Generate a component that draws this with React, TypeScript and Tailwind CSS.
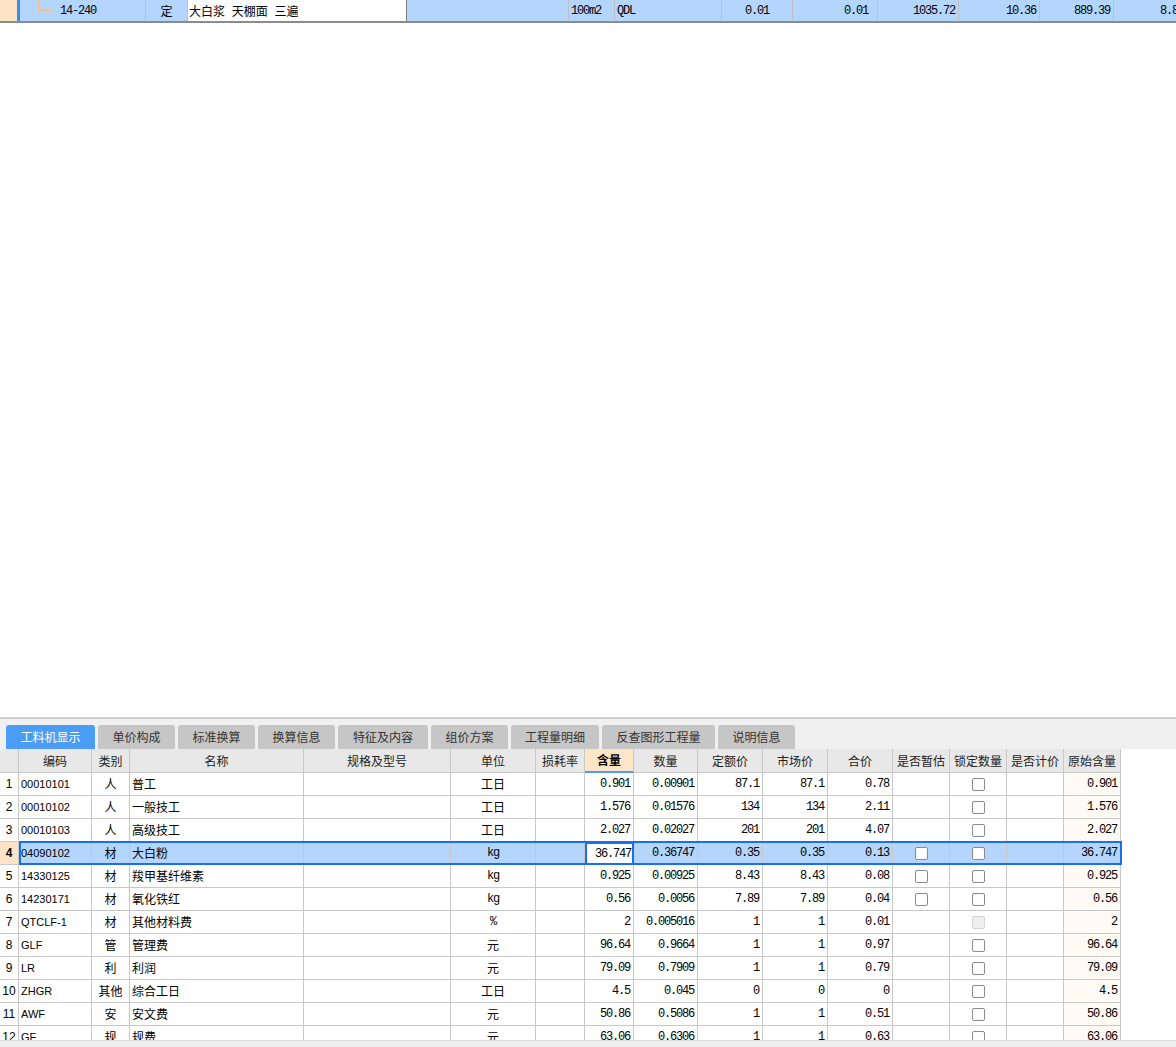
import React from "react";

const cjk = "font-['Noto_Sans_CJK_SC','Noto_Sans',sans-serif]";
const mono = "font-['Liberation_Mono','Noto_Sans_CJK_SC',monospace] tracking-[-1.2px]";
const sans = "font-['Liberation_Sans','Noto_Sans_CJK_SC',sans-serif]";

type Row = {
    code: string;
    kind: string;
    name: string;
    unit: string;
    qty: string;
    amount: string;
    quota: string;
    market: string;
    total: string;
    est?: boolean;
    lockDisabled?: boolean;
    orig: string;
};

const rows: Row[] = [
    { code: "00010101", kind: "人", name: "普工", unit: "工日", qty: "0.901", amount: "0.00901", quota: "87.1", market: "87.1", total: "0.78", orig: "0.901" },
    { code: "00010102", kind: "人", name: "一般技工", unit: "工日", qty: "1.576", amount: "0.01576", quota: "134", market: "134", total: "2.11", orig: "1.576" },
    { code: "00010103", kind: "人", name: "高级技工", unit: "工日", qty: "2.027", amount: "0.02027", quota: "201", market: "201", total: "4.07", orig: "2.027" },
    { code: "04090102", kind: "材", name: "大白粉", unit: "kg", qty: "36.747", amount: "0.36747", quota: "0.35", market: "0.35", total: "0.13", est: true, orig: "36.747" },
    { code: "14330125", kind: "材", name: "羧甲基纤维素", unit: "kg", qty: "0.925", amount: "0.00925", quota: "8.43", market: "8.43", total: "0.08", est: true, orig: "0.925" },
    { code: "14230171", kind: "材", name: "氧化铁红", unit: "kg", qty: "0.56", amount: "0.0056", quota: "7.89", market: "7.89", total: "0.04", est: true, orig: "0.56" },
    { code: "QTCLF-1", kind: "材", name: "其他材料费", unit: "%", qty: "2", amount: "0.005016", quota: "1", market: "1", total: "0.01", lockDisabled: true, orig: "2" },
    { code: "GLF", kind: "管", name: "管理费", unit: "元", qty: "96.64", amount: "0.9664", quota: "1", market: "1", total: "0.97", orig: "96.64" },
    { code: "LR", kind: "利", name: "利润", unit: "元", qty: "79.09", amount: "0.7909", quota: "1", market: "1", total: "0.79", orig: "79.09" },
    { code: "ZHGR", kind: "其他", name: "综合工日", unit: "工日", qty: "4.5", amount: "0.045", quota: "0", market: "0", total: "0", orig: "4.5" },
    { code: "AWF", kind: "安", name: "安文费", unit: "元", qty: "50.86", amount: "0.5086", quota: "1", market: "1", total: "0.51", orig: "50.86" },
    { code: "GF", kind: "规", name: "规费", unit: "元", qty: "63.06", amount: "0.6306", quota: "1", market: "1", total: "0.63", orig: "63.06" },
];

const tabs = ["工料机显示", "单价构成", "标准换算", "换算信息", "特征及内容", "组价方案", "工程量明细", "反查图形工程量", "说明信息"];
const tabWidths = ["w-[89px]", "w-[77px]", "w-[77px]", "w-[77px]", "w-[90px]", "w-[77px]", "w-[88px]", "w-[113px]", "w-[77px]"];

const headers = ["", "编码", "类别", "名称", "规格及型号", "单位", "损耗率", "含量", "数量", "定额价", "市场价", "合价", "是否暂估", "锁定数量", "是否计价", "原始含量"];

const cell = "border-r border-b border-[#c8c8c8] flex items-center overflow-hidden whitespace-nowrap";
const topCell = "shrink-0 border-l border-[#c0c0c0] flex items-center whitespace-nowrap";

function Checkbox({ disabled }: { disabled?: boolean }) {
    return (
        <span
            className={
                disabled
                    ? "w-[13px] h-[13px] rounded-[2px] border border-[#d4d4d4] bg-[#eeeeee]"
                    : "w-[13px] h-[13px] rounded-[2px] border border-[#8a8a8a] bg-white"
            }
        />
    );
}

export default function App() {
    return (
        <div className={`h-[1047px] w-[1176px] flex flex-col overflow-hidden bg-white text-[12px] text-black ${cjk}`}>
            {/* current quota row */}
            <div className="h-[23px] flex border-b-2 border-[#8c8c8c] shrink-0 overflow-hidden">
                <div className="w-[17px] shrink-0 bg-[#fde4c6]" />
                <div className="w-[2px] shrink-0 bg-[#3c8cf0]" />
                <div className="w-px shrink-0 bg-[#808080]" />
                <div className="flex flex-1 min-w-0 bg-[#b4d5fe]">
                    <div className="relative w-[125px] shrink-0 flex items-center pl-[40px]">
                        <svg className="absolute left-[17px] top-0" width="20" height="12" viewBox="0 0 20 12">
                            <path d="M1.5 0 V10.5 H17" stroke="#f3c07c" strokeWidth="1" fill="none" />
                        </svg>
                        <span className={mono}>14-240</span>
                    </div>
                    <div className={`${topCell} w-[42px] justify-center`}>定</div>
                    <div className="shrink-0 w-[381px] border-l border-[#c0c0c0] flex">
                        <div className="w-[219px] bg-white border-r border-[#808080] flex items-center pl-[1px] whitespace-nowrap [word-spacing:4px]">
                            大白浆 天棚面 三遍
                        </div>
                    </div>
                    <div className={`${topCell} w-[46px] pl-[2px] ${mono}`}>100m2</div>
                    <div className={`${topCell} w-[107px] pl-[2px] ${mono}`}>QDL</div>
                    <div className={`${topCell} w-[71px] justify-center ${mono}`}>0.01</div>
                    <div className={`${topCell} w-[85px] justify-end pr-[9px] ${mono}`}>0.01</div>
                    <div className={`${topCell} w-[81px] justify-end pr-[3px] ${mono}`}>1035.72</div>
                    <div className={`${topCell} w-[81px] justify-end pr-[3px] ${mono}`}>10.36</div>
                    <div className={`${topCell} w-[74px] justify-end pr-[3px] ${mono}`}>889.39</div>
                    <div className={`${topCell} w-[90px] pl-[46px] ${mono}`}>8.86</div>
                </div>
            </div>

            <div className="flex-1" />

            {/* bottom detail panel */}
            <div className="h-[330px] shrink-0 border-t-2 border-[#cfcfcf] flex flex-col">
                <div className="h-[30px] bg-[#f0f0f0] flex items-end gap-[3px] pl-[6px]">
                    {tabs.map((t, i) => (
                        <div
                            key={t}
                            className={`${tabWidths[i]} h-[24px] rounded-t-[3px] flex items-center justify-center text-[12px] ${
                                i === 0 ? "bg-[#4a9cf5] text-white" : "bg-[#c6c6c6] text-[#333]"
                            }`}
                        >
                            {t}
                        </div>
                    ))}
                </div>

                <div className="flex-1 overflow-hidden">
                    <div className="grid grid-cols-[19px_73px_38px_174px_147px_85px_49px_49px_64px_65px_65px_65px_57px_57px_57px_57px] h-[24px] w-[1121px]">
                        {headers.map((h, i) =>
                            i === 7 ? (
                                <div key={i} className="border-r border-b-2 border-r-[#c8c8c8] border-b-[#4a9cf5] bg-[#fde5c7] flex items-center justify-center font-bold">
                                    {h}
                                </div>
                            ) : (
                                <div key={i} className={`${cell} bg-[#e8e8e8] justify-center text-[#222]`}>
                                    {h}
                                </div>
                            )
                        )}
                    </div>

                    {rows.map((r, idx) => {
                        const sel = idx === 3;
                        const bg = sel ? "bg-[#b4d5fe]" : "";
                        return (
                            <div
                                key={r.code}
                                className="relative grid grid-cols-[19px_73px_38px_174px_147px_85px_49px_49px_64px_65px_65px_65px_57px_57px_57px_57px] h-[23px] w-[1121px]"
                            >
                                <div className={`${cell} justify-center ${sans} ${sel ? "bg-[#fde4c6] font-bold" : ""}`}>{idx + 1}</div>
                                <div className={`${cell} ${bg} pl-[2px] ${sans} text-[11px]`}>{r.code}</div>
                                <div className={`${cell} ${bg} justify-center`}>{r.kind}</div>
                                <div className={`${cell} ${bg} pl-[2px]`}>{r.name}</div>
                                <div className={`${cell} ${bg}`} />
                                <div className={`${cell} ${bg} justify-center ${r.unit === "kg" || r.unit === "%" ? mono : ""}`}>{r.unit}</div>
                                <div className={`${cell} ${bg}`} />
                                {sel ? (
                                    <div className={`border-2 border-[#1a6ff0] bg-white flex items-center justify-end pr-[1px] ${mono}`}>{r.qty}</div>
                                ) : (
                                    <div className={`${cell} justify-end pr-[3px] ${mono}`}>{r.qty}</div>
                                )}
                                <div className={`${cell} ${bg} justify-end pr-[3px] ${mono}`}>{r.amount}</div>
                                <div className={`${cell} ${bg} justify-end pr-[3px] ${mono}`}>{r.quota}</div>
                                <div className={`${cell} ${bg} justify-end pr-[3px] ${mono}`}>{r.market}</div>
                                <div className={`${cell} ${bg} justify-end pr-[3px] ${mono}`}>{r.total}</div>
                                <div className={`${cell} ${bg} justify-center`}>{r.est && <Checkbox />}</div>
                                <div className={`${cell} ${bg} justify-center`}>
                                    <Checkbox disabled={r.lockDisabled} />
                                </div>
                                <div className={`${cell} ${bg}`} />
                                <div className={`${cell} ${sel ? bg : "bg-[#fffaf4]"} justify-end pr-[3px] ${mono}`}>{r.orig}</div>
                                {sel && <div className="absolute left-[19px] right-[-1px] -top-px bottom-0 border-2 border-[#1a6ff0] pointer-events-none" />}
                            </div>
                        );
                    })}
                </div>

                <div className="h-[7px] border-t border-[#dcdcdc] bg-[#f0f0f0]" />
            </div>
        </div>
    );
}
